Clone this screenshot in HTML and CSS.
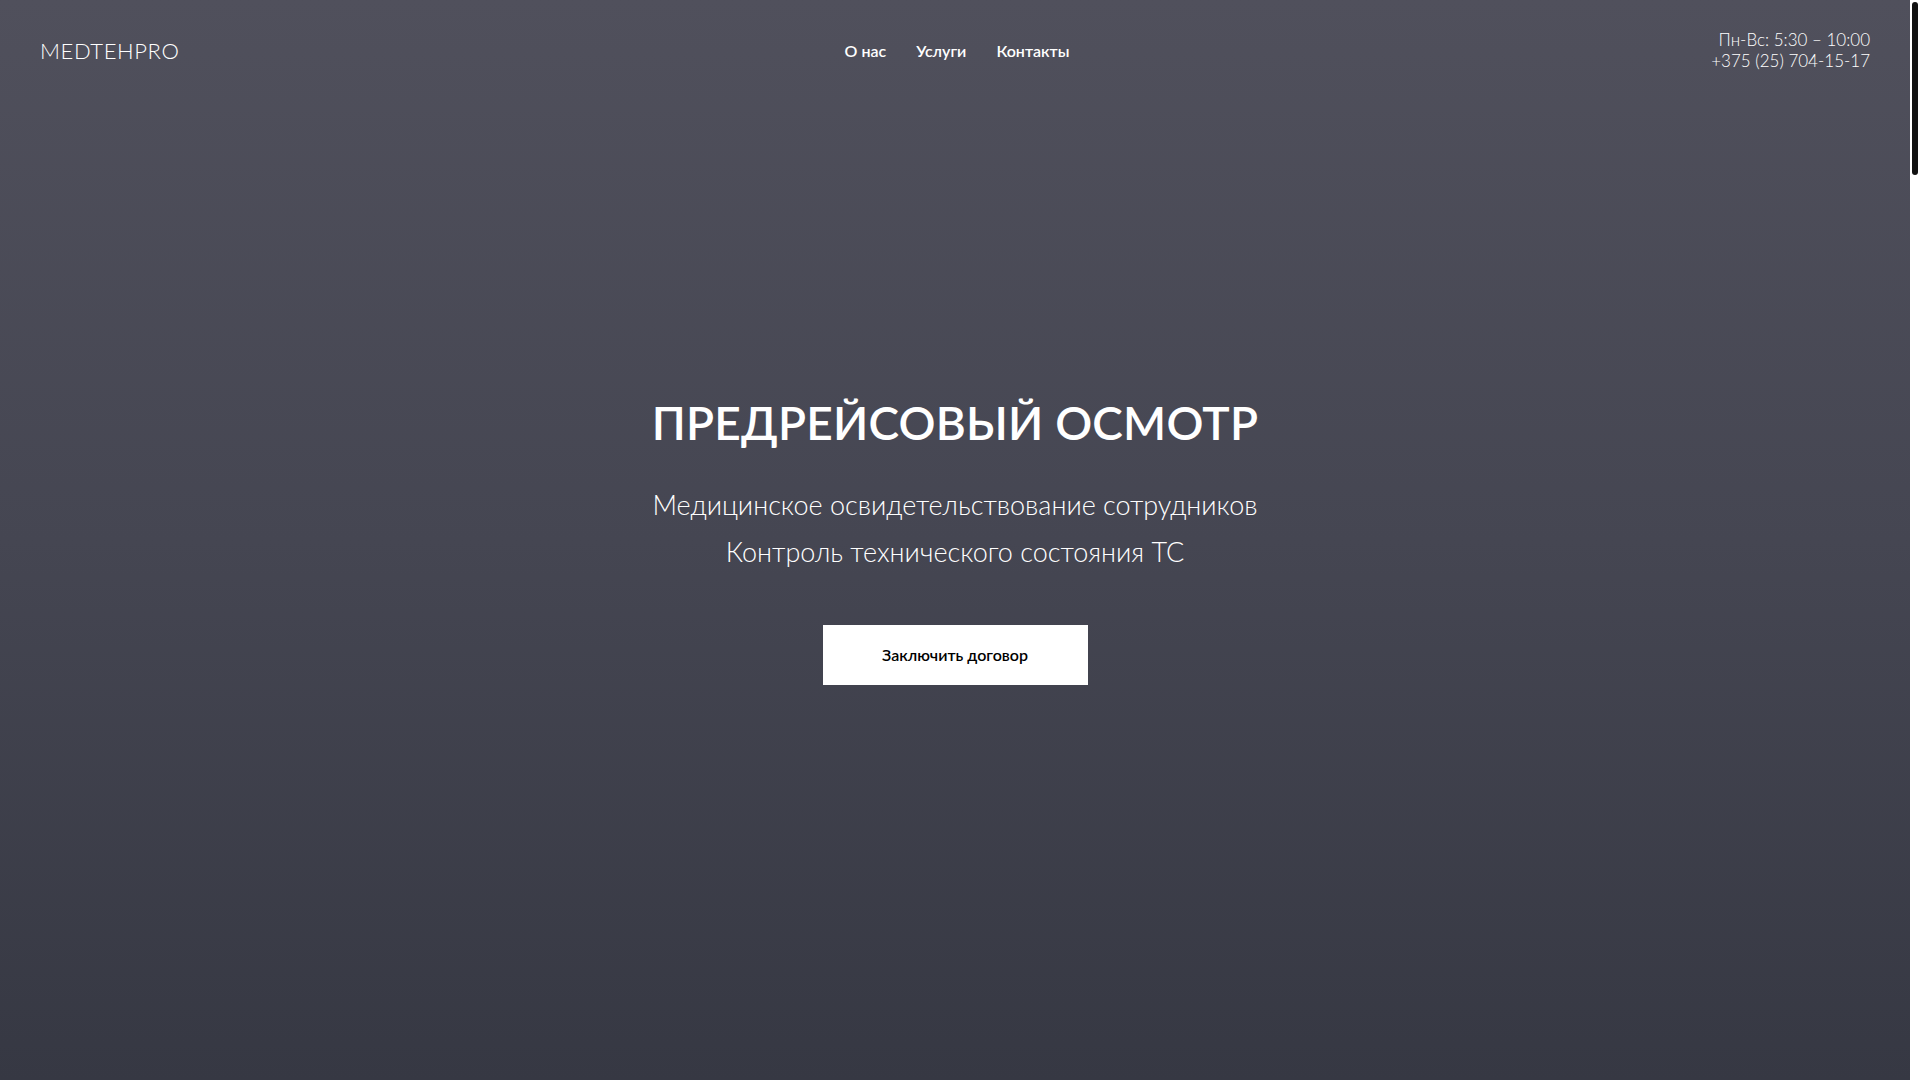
FILE: index.html
```html
<!DOCTYPE html>
<html lang="ru">
<head>
<meta charset="utf-8">
<title>MEDTEHPRO — Предрейсовый осмотр</title>
<link rel="stylesheet" href="styles.css">
</head>
<body>
<section class="hero">
  <header class="header">
    <a class="logo" href="#">MEDTEHPRO</a>
    <nav class="nav">
      <a href="#">О нас</a>
      <a href="#">Услуги</a>
      <a href="#">Контакты</a>
    </nav>
    <div class="contacts">
      <div>Пн-Вс: 5:30 – 10:00</div>
      <div>+375 (25) 704-15-17</div>
    </div>
  </header>
  <div class="hero-body">
    <h1 class="title">ПРЕДРЕЙСОВЫЙ ОСМОТР</h1>
    <p class="subtitle">Медицинское освидетельствование сотрудников<br>Контроль технического состояния ТС</p>
    <a class="btn" href="#">Заключить договор</a>
  </div>
</section>
<div class="scroll-thumb" aria-hidden="true"></div>
</body>
</html>
```

FILE: styles.css
```css
html, body {
  margin: 0;
  padding: 0;
  overflow: hidden;
}
body {
  font-family: Lato, "Noto Sans", sans-serif;
  color: #fff;
  background: #fff;
}
a {
  color: inherit;
  text-decoration: none;
}
.hero {
  height: 100vh;
  margin-right: 10px;
  display: flex;
  flex-direction: column;
  background: linear-gradient(180deg, #50505c 0%, #454652 50%, #363843 100%);
  padding-bottom: 100px;
  box-sizing: border-box;
}
.header {
  height: 100px;
  display: grid;
  grid-template-columns: 1fr auto 1fr;
  align-items: center;
  padding: 0 40px;
}
.logo {
  font-size: 22px;
  font-weight: 300;
  letter-spacing: 0.6px;
  justify-self: start;
}
.nav {
  display: flex;
  gap: 30px;
  font-size: 16px;
  font-weight: 600;
  margin-left: 4px;
}
.contacts {
  justify-self: end;
  text-align: right;
  font-size: 17px;
  font-weight: 300;
  line-height: 21px;
  margin-top: 0;
}
.hero-body {
  flex: 1;
  display: flex;
  flex-direction: column;
  align-items: center;
  justify-content: center;
  text-align: center;
}
.title {
  margin: 0;
  font-size: 46px;
  font-weight: 600;
  line-height: 1.2;
  letter-spacing: 0.2px;
}
.subtitle {
  margin: 30px 0 0;
  font-size: 27px;
  font-weight: 300;
  line-height: 47px;
}
.btn {
  margin-top: 50px;
  width: 265px;
  height: 60px;
  display: flex;
  align-items: center;
  justify-content: center;
  background: #fff;
  color: #000;
  font-size: 16px;
  font-weight: 600;
}
.scroll-thumb {
  position: fixed;
  top: 2px;
  right: 2px;
  width: 6px;
  height: 173px;
  border-radius: 3px;
  background: #111;
}
```
